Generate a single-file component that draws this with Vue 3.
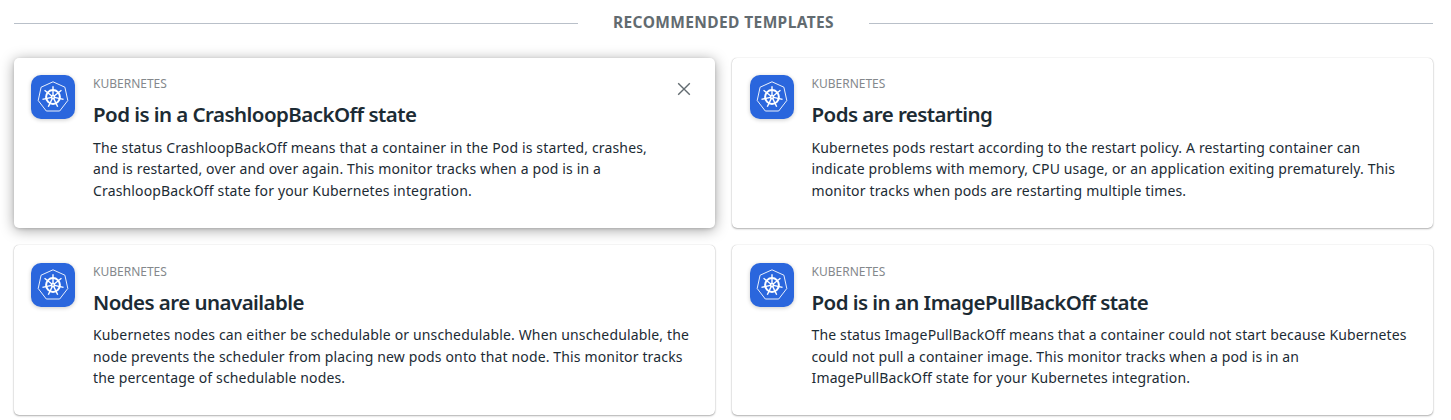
<script setup>
const cards = [
  { title: 'Pod is in a CrashloopBackOff state', active: true, lines: ['The status CrashloopBackOff means that a container in the Pod is started, crashes,', 'and is restarted, over and over again. This monitor tracks when a pod is in a', 'CrashloopBackOff state for your Kubernetes integration.'] },
  { title: 'Pods are restarting', lines: ['Kubernetes pods restart according to the restart policy. A restarting container can', 'indicate problems with memory, CPU usage, or an application exiting prematurely. This', 'monitor tracks when pods are restarting multiple times.'] },
  { title: 'Nodes are unavailable', lines: ['Kubernetes nodes can either be schedulable or unschedulable. When unschedulable, the', 'node prevents the scheduler from placing new pods onto that node. This monitor tracks', 'the percentage of schedulable nodes.'] },
  { title: 'Pod is in an ImagePullBackOff state', lines: ['The status ImagePullBackOff means that a container could not start because Kubernetes', 'could not pull a container image. This monitor tracks when a pod is in an', 'ImagePullBackOff state for your Kubernetes integration.'] },
]
const spokes = [0, 1, 2, 3, 4, 5, 6].map(i => i * 360 / 7)
</script>

<template>
  <main class="page">
    <header class="heading"><i></i><h1>RECOMMENDED TEMPLATES</h1><i></i></header>
    <div class="grid">
      <article v-for="c in cards" :key="c.title" class="card" :class="{ active: c.active }">
        <div class="logo">
          <svg width="44" height="44" viewBox="0 0 44 44" fill="none" stroke="#fff">
            <path d="M22 6.8 33.9 12.2 36.8 25.5 28.7 36H15.3L7.2 25.5 10.1 12.2Z" stroke-width="0.9" stroke-linejoin="round" />
            <circle cx="22" cy="22" r="6.9" stroke-width="2" />
            <g v-for="a in spokes" :key="a" :transform="`rotate(${a} 22 22)`">
              <path d="M22 20.5V11.2" stroke-width="1.4" />
            </g>
            <circle cx="22" cy="22" r="2.3" fill="#fff" stroke="none" />
            <circle cx="22" cy="22" r="0.7" fill="#2a66dd" stroke="none" />
          </svg>
        </div>
        <div class="body">
          <div class="tag">KUBERNETES</div>
          <h2>{{ c.title }}</h2>
          <p><span v-for="l in c.lines" :key="l">{{ l }}</span></p>
        </div>
        <svg v-if="c.active" class="close" width="14" height="14" viewBox="0 0 14 14"><path d="M1.2 1.2 12.8 12.8M12.8 1.2 1.2 12.8" fill="none" stroke="#626b70" stroke-width="1.4" /></svg>
      </article>
    </div>
  </main>
</template>

<style>
body { margin: 0; background: #fff; overflow: hidden; }
</style>
<style scoped>
.page { box-sizing: border-box; height: 420px; padding: 0 18px 0 14px; font-family: "Noto Sans", sans-serif; color: #1c2b34; overflow: hidden; }
.heading { display: flex; align-items: center; height: 46px; margin-bottom: 12px; }
.heading i { flex: 1; height: 1px; background: #b9c0c9; }
h1 { margin: -2px 35px 0 35px; font-size: 15.5px; line-height: 20px; font-weight: 700; letter-spacing: .38px; color: #626b70; white-space: nowrap; }
.grid { display: grid; grid-template-columns: 701px 701px; column-gap: 17px; row-gap: 17px; }
.card { box-sizing: border-box; height: 170px; padding: 17px; display: flex; gap: 18px; position: relative; background: #fff; border-radius: 5px; box-shadow: 0 0 1px rgba(0,0,0,.25), 0 1px 2px rgba(0,0,0,.3); }
.card:nth-child(2n) { padding-left: 18px; gap: 17.5px; }
.card:nth-child(n+3) { padding-top: 18px; }
.card p { margin-top: -.4px; }
.card:nth-child(n+3) p { margin-top: -1px; }
.active { box-shadow: 0 2px 14px rgba(0,0,0,.36), 0 1px 3px rgba(0,0,0,.14); }
.logo { width: 44px; height: 44px; border-radius: 10px; background: #2a66dd; box-shadow: 0 1px 4px rgba(0,0,0,.2); }
.logo svg { display: block; }
.tag { font-size: 12px; line-height: 18px; color: #84888c; }
h2 { margin: 5px 0 7px; font-size: 20.5px; line-height: 32px; font-weight: 600; letter-spacing: -.55px; white-space: nowrap; }
p { margin: 0; font-size: 14px; line-height: 21.5px; font-weight: 400; letter-spacing: .145px; }
p span { display: block; white-space: nowrap; }
.close { position: absolute; right: 24.5px; top: 23.5px; }
</style>
